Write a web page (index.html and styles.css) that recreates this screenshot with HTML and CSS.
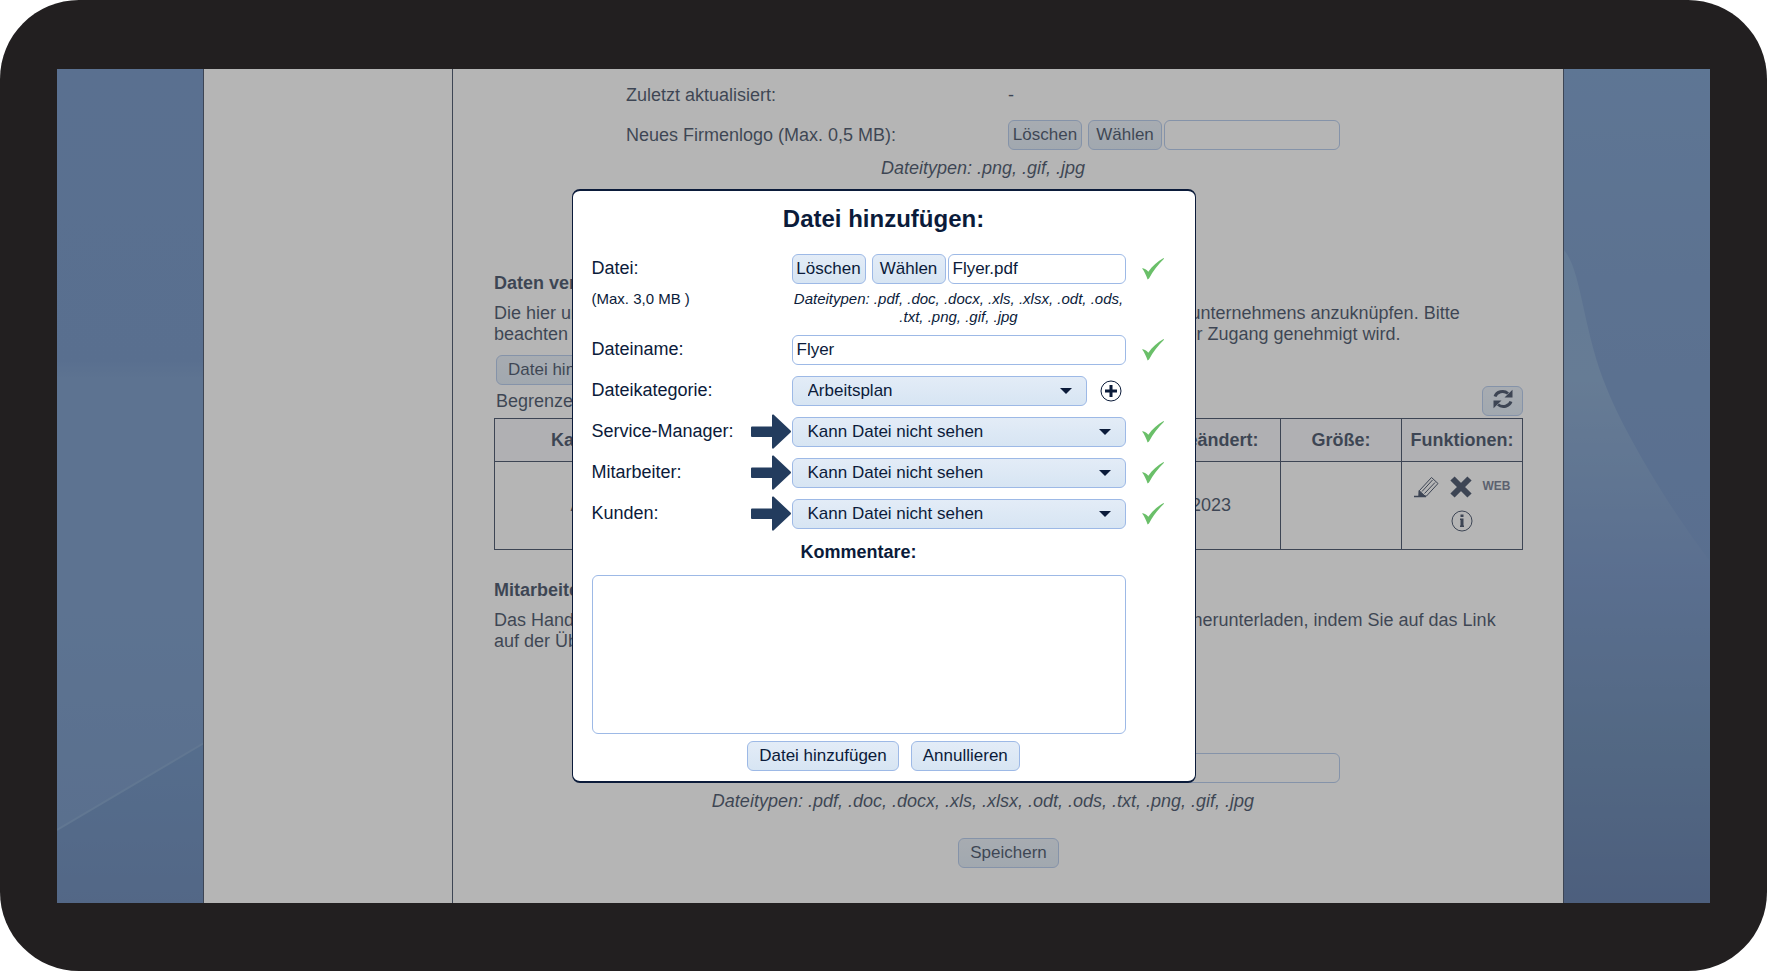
FILE: index.html
```html
<!DOCTYPE html>
<html lang="de">
<head>
    <meta charset="UTF-8">
    <meta name="viewport" content="width=device-width, initial-scale=1.0">
    <title>Datei hinzufügen</title>
    <link rel="stylesheet" href="styles.css">
</head>
<body>
    <svg class="symbols" aria-hidden="true">
        <symbol id="check" viewBox="0 0 22 22">
            <path d="M0 10.3C2.5 10.5 4.600 11.600 6.300 13.700C10.500 8 15.500 3.300 21.600 0L22 .8C16 6.500 11 13 7 20.500L5.600 21.500C4.300 17.500 2.500 13.700 0 10.300Z" fill="#6abf69"/>
        </symbol>
        <symbol id="arrow" viewBox="0 0 40 35">
            <path d="M1 12.500H21V1.500Q21 0 22.500 .5L39.500 16.500Q40.500 17.500 39.500 18.500L22.500 34.500Q21 35 21 33.500V23H1Q0 23 0 22V13.500Q0 12.500 1 12.500Z" fill="#233c5e"/>
        </symbol>
    </svg>

    <div class="tablet">
        <div class="screen">
            <svg class="wallpaper" viewBox="0 0 1653 834" preserveAspectRatio="none" aria-hidden="true">
                <defs>
                    <linearGradient id="leftSky" x1="0" y1="0" x2="0" y2="1">
                        <stop offset="0" stop-color="#4673b4"/>
                        <stop offset=".35" stop-color="#4571b2"/>
                        <stop offset=".37" stop-color="#4c78b5"/>
                        <stop offset=".65" stop-color="#4c79b6"/>
                        <stop offset=".9" stop-color="#4772b0"/>
                    </linearGradient>
                    <linearGradient id="leftFloor" x1="0" y1="0" x2="0" y2="1">
                        <stop offset="0" stop-color="#3c6dad"/>
                        <stop offset="1" stop-color="#3761a0"/>
                    </linearGradient>
                    <linearGradient id="rightSky" x1="0" y1="0" x2="0" y2="1">
                        <stop offset="0" stop-color="#4f7ebc"/>
                        <stop offset=".25" stop-color="#4b77b5"/>
                        <stop offset=".6" stop-color="#4570b2"/>
                    </linearGradient>
                    <linearGradient id="rightWave" x1="0" y1="0" x2="0" y2="1">
                        <stop offset="0" stop-color="#5a89bf"/>
                        <stop offset=".2" stop-color="#5f8bbd"/>
                        <stop offset=".5" stop-color="#4770b2"/>
                        <stop offset=".75" stop-color="#37639b"/>
                        <stop offset="1" stop-color="#2b508e"/>
                    </linearGradient>
                </defs>
                <rect width="827" height="834" fill="url(#leftSky)"/>
                <path d="M0 761L147 674V834H0Z" fill="url(#leftFloor)"/>
                <path d="M0 761L147 674" stroke="#5580b7" stroke-width="2"/>
                <rect x="827" width="826" height="834" fill="url(#rightSky)"/>
                <path d="M1506 180C1525 200 1525 260 1550 320C1570 370 1620 450 1653 492V834H1506Z" fill="url(#rightWave)"/>
            </svg>

            <div class="page">
                <aside class="sidebar"></aside>
                <main class="content">
                    <div class="settings">
                        <div class="settings-row">
                            <span>Zuletzt aktualisiert:</span>
                            <span>-</span>
                        </div>
                        <div class="settings-row">
                            <label for="logoFile">Neues Firmenlogo (Max. 0,5 MB):</label>
                            <div class="file-picker">
                                <button type="button" class="btn btn-file">Löschen</button>
                                <button type="button" class="btn btn-file">Wählen</button>
                                <input type="text" id="logoFile" class="field">
                            </div>
                        </div>
                        <p class="types">Dateitypen: .png, .gif, .jpg</p>
                    </div>

                    <section class="files">
                        <h2>Daten verknüpfen:</h2>
                        <p>Die hier unten genannten Daten können verwendet werden, um an Daten Ihres Kundenunternehmens anzuknüpfen. Bitte beachten Sie, dass die Daten erst dann im Account verwendet werden können, wenn der Zugang genehmigt wird.</p>
                        <button type="button" class="btn btn-add">Datei hinzufügen</button>
                        <div class="toolbar">
                            <span>Begrenzen auf:</span>
                            <button type="button" class="btn btn-refresh" aria-label="Aktualisieren">
                                <svg width="20" height="20" viewBox="0 0 20 20">
                                    <path d="M2 7.500C3.500 3 10.500 .5 15 4.500" fill="none" stroke="#0b1b3a" stroke-width="3"/>
                                    <path d="M19.500 .8V8.500H11.500Z" fill="#0b1b3a"/>
                                    <path d="M18 12.500C16.500 17 9.500 19.500 5 15.500" fill="none" stroke="#0b1b3a" stroke-width="3"/>
                                    <path d="M.5 19.200V11.500H8.500Z" fill="#0b1b3a"/>
                                </svg>
                            </button>
                        </div>
                        <table>
                            <colgroup>
                                <col class="col-category">
                                <col>
                                <col class="col-changed">
                                <col class="col-size">
                                <col class="col-actions">
                            </colgroup>
                            <thead>
                                <tr>
                                    <th>Kategorie:</th>
                                    <th>Dateiname:</th>
                                    <th>Zuletzt geändert:</th>
                                    <th>Größe:</th>
                                    <th>Funktionen:</th>
                                </tr>
                            </thead>
                            <tbody>
                                <tr>
                                    <td>Archiv</td>
                                    <td>Handbuch</td>
                                    <td>07.03.2023</td>
                                    <td></td>
                                    <td>
                                        <div class="actions">
                                            <button type="button" class="icon-btn" aria-label="Bearbeiten">
                                                <svg width="25" height="22" viewBox="0 0 25 22" fill="none" stroke="#0b1b3a">
                                                    <path d="M5.500 14.500L17.500 1.500L24 7.500L12.500 20L5 20.500Z"/>
                                                    <path d="M8 15.500L18.500 4M10.500 17.500L21 6.500"/>
                                                    <path d="M5 14.500V20.500H11.500Z" fill="#0b1b3a"/>
                                                    <path d="M0 20.500H12" stroke-width="1.500"/>
                                                </svg>
                                            </button>
                                            <button type="button" class="icon-btn" aria-label="Löschen">
                                                <svg width="22" height="22" viewBox="0 0 22 22">
                                                    <path d="M2.500 2.500L19.500 19.500M19.500 2.500L2.500 19.500" stroke="#0b1b3a" stroke-width="6"/>
                                                </svg>
                                            </button>
                                            <a href="#" class="web-link">WEB</a>
                                            <button type="button" class="icon-btn" aria-label="Information">
                                                <svg width="22" height="22" viewBox="0 0 22 22">
                                                    <circle cx="11" cy="11" r="10" fill="none" stroke="#0b1b3a"/>
                                                    <path d="M9.500 4.500H12.500V7H9.500ZM9 8.500H12.500V15.500H13V17H9V15.500H9.500V10H9Z" fill="#0b1b3a"/>
                                                </svg>
                                            </button>
                                        </div>
                                    </td>
                                </tr>
                            </tbody>
                        </table>
                    </section>

                    <section class="handbook">
                        <h2>Mitarbeiterhandbuch:</h2>
                        <p>Das Handbuch wird hochgeladen. Die Mitarbeiter können das Handbuch danach selbst herunterladen, indem Sie auf das Link auf der Übersichtsseite klicken.</p>
                    </section>

                    <div class="settings">
                        <div class="settings-row">
                            <label for="handbookFile">Neues Handbuch:</label>
                            <div class="file-picker">
                                <button type="button" class="btn btn-file">Löschen</button>
                                <button type="button" class="btn btn-file">Wählen</button>
                                <input type="text" id="handbookFile" class="field">
                            </div>
                        </div>
                        <p class="types">Dateitypen: .pdf, .doc, .docx, .xls, .xlsx, .odt, .ods, .txt, .png, .gif, .jpg</p>
                    </div>
                    <button type="button" class="btn btn-save">Speichern</button>
                </main>
            </div>

            <div class="overlay">
                <form class="dialog" role="dialog" aria-labelledby="dialogTitle">
                    <h1 id="dialogTitle">Datei hinzufügen:</h1>

                    <div class="form-row">
                        <label for="file">Datei:</label>
                        <div class="file-picker">
                            <button type="button" class="btn btn-file">Löschen</button>
                            <button type="button" class="btn btn-file">Wählen</button>
                            <input type="text" id="file" class="field" value="Flyer.pdf">
                        </div>
                        <svg class="check"><use href="#check"/></svg>
                    </div>
                    <div class="form-row form-hint">
                        <span>(Max. 3,0 MB )</span>
                        <em>Dateitypen: .pdf, .doc, .docx, .xls, .xlsx, .odt, .ods, .txt, .png, .gif, .jpg</em>
                    </div>
                    <div class="form-row">
                        <label for="fileName">Dateiname:</label>
                        <input type="text" id="fileName" class="field" value="Flyer">
                        <svg class="check"><use href="#check"/></svg>
                    </div>
                    <div class="form-row">
                        <label for="category">Dateikategorie:</label>
                        <div class="category">
                            <div class="select">
                                <select id="category">
                                    <option>Arbeitsplan</option>
                                    <option>Archiv</option>
                                </select>
                            </div>
                            <button type="button" class="icon-btn" aria-label="Kategorie hinzufügen">
                                <svg width="22" height="22" viewBox="0 0 22 22">
                                    <circle cx="11" cy="11" r="10" fill="none" stroke="#0b1b3a"/>
                                    <path d="M11 5V17M5 11H17" stroke="#0b1b3a" stroke-width="3"/>
                                </svg>
                            </button>
                        </div>
                    </div>
                    <div class="form-row">
                        <div class="label-arrow">
                            <label for="manager">Service-Manager:</label>
                            <svg class="arrow"><use href="#arrow"/></svg>
                        </div>
                        <div class="select">
                            <select id="manager">
                                <option>Kann Datei nicht sehen</option>
                                <option>Kann Datei sehen</option>
                            </select>
                        </div>
                        <svg class="check"><use href="#check"/></svg>
                    </div>
                    <div class="form-row">
                        <div class="label-arrow">
                            <label for="employee">Mitarbeiter:</label>
                            <svg class="arrow"><use href="#arrow"/></svg>
                        </div>
                        <div class="select">
                            <select id="employee">
                                <option>Kann Datei nicht sehen</option>
                                <option>Kann Datei sehen</option>
                            </select>
                        </div>
                        <svg class="check"><use href="#check"/></svg>
                    </div>
                    <div class="form-row">
                        <div class="label-arrow">
                            <label for="customer">Kunden:</label>
                            <svg class="arrow"><use href="#arrow"/></svg>
                        </div>
                        <div class="select">
                            <select id="customer">
                                <option>Kann Datei nicht sehen</option>
                                <option>Kann Datei sehen</option>
                            </select>
                        </div>
                        <svg class="check"><use href="#check"/></svg>
                    </div>

                    <div class="comments">
                        <label for="comments">Kommentare:</label>
                        <textarea id="comments"></textarea>
                    </div>

                    <div class="dialog-buttons">
                        <button type="submit" class="btn">Datei hinzufügen</button>
                        <button type="button" class="btn">Annullieren</button>
                    </div>
                </form>
            </div>
        </div>
    </div>
</body>
</html>
```
FILE: styles.css
```css
* {
    box-sizing: border-box;
}
body {
    margin: 0;
    background-color: white;
    color: #0b1b3a;
    font-family: "Liberation Sans", Arial, sans-serif;
    font-size: 18px;
    line-height: 21px;
}
h1, h2, p {
    margin: 0;
}
h2 {
    font-size: 18px;
    line-height: 21px;
    margin-bottom: 9px;
}
.symbols {
    display: none;
}

/* tablet frame */
.tablet {
    display: flex;
    min-height: 100vh;
    padding: 69px 57px 68px;
    background-color: #221f20;
    border-radius: 79px;
}
.screen {
    position: relative;
    flex: 1;
    display: flex;
    justify-content: center;
    overflow: hidden;
}
.wallpaper {
    position: absolute;
    inset: 0;
    width: 100%;
    height: 100%;
}
.page {
    position: relative;
    display: flex;
    width: 100%;
    max-width: 1361px;
    background-color: white;
    border-left: 1px solid #0b1b3a;
    border-right: 1px solid #0b1b3a;
}
.sidebar {
    width: 249px;
    border-right: 1px solid #0b1b3a;
}
.content {
    flex: 1;
    display: flex;
    flex-direction: column;
    padding: 6px 40px 30px 41px;
}

/* controls */
button, input, select, textarea {
    font-family: inherit;
    font-size: 17px;
    color: inherit;
}
.btn {
    height: 30px;
    padding: 0 11px;
    background: linear-gradient(#e3ecf7, #d7e5f3);
    border: 1px solid #9db9e6;
    border-radius: 6px;
    cursor: pointer;
}
.btn-file {
    flex: none;
    width: 74px;
    padding: 0;
    margin-right: 6px;
}
.field {
    width: 100%;
    min-width: 0;
    height: 30px;
    padding: 0 4px;
    background-color: white;
    border: 1px solid #9db9e6;
    border-radius: 6px;
}
.file-picker {
    display: flex;
}
.btn-file + .btn-file {
    margin-right: 2px;
}
.icon-btn {
    display: block;
    flex: none;
    padding: 0;
    background: none;
    border: none;
    cursor: pointer;
}
.icon-btn svg {
    display: block;
}

/* page content */
.settings {
    width: 714px;
    margin-left: 132px;
}
.settings-row {
    display: grid;
    grid-template-columns: 382px 1fr;
    align-items: center;
    min-height: 40px;
}
.types {
    padding-top: 3px;
    text-align: center;
    font-style: italic;
}
.files {
    margin-top: 94px;
}
.btn-add {
    display: block;
    margin: 10px 0 0 2px;
}
.toolbar {
    display: flex;
    justify-content: space-between;
    align-items: center;
    padding: 1px 0 2px 2px;
}
.btn-refresh {
    width: 41px;
    padding: 0;
}
table {
    width: 100%;
    table-layout: fixed;
    border-collapse: collapse;
}
th, td {
    padding: 0;
    border: 1px solid #0b1b3a;
    text-align: center;
}
th {
    height: 43px;
    background-color: #f5f5fb;
}
td {
    height: 88px;
}
.col-category {
    width: 202px;
}
.col-changed {
    width: 189px;
}
.col-size, .col-actions {
    width: 121px;
}
.actions {
    display: flex;
    flex-wrap: wrap;
    justify-content: center;
    align-items: center;
    gap: 12px 11px;
    padding-bottom: 4px;
}
.web-link {
    color: #4a5570;
    font-size: 12px;
    font-weight: bold;
    text-decoration: none;
}
.handbook {
    margin-top: 30px;
    margin-bottom: 96px;
}
.btn-save {
    align-self: center;
    width: 101px;
    margin-top: 26px;
}

/* dialog */
.overlay {
    position: absolute;
    inset: 0;
    display: flex;
    justify-content: center;
    align-items: center;
    background-color: rgba(110, 110, 110, 0.51);
}
.dialog {
    width: 624px;
    padding: 14px 19px 10px;
    background-color: white;
    border: 1px solid #0b1b3a;
    border-top-width: 2px;
    border-bottom-width: 2px;
    border-radius: 8px;
}
.dialog h1 {
    margin-bottom: 15px;
    font-size: 24px;
    line-height: 28px;
    text-align: center;
}
.form-row {
    display: grid;
    grid-template-columns: 200px 334px 1fr;
    align-items: center;
    min-height: 41px;
}
.form-hint {
    align-items: start;
    min-height: 40px;
    padding-top: 1px;
    font-size: 15px;
    line-height: 18px;
}
.form-hint em {
    text-align: center;
}
.check {
    width: 22px;
    height: 22px;
    margin-left: 16px;
}
.label-arrow {
    display: flex;
    justify-content: space-between;
    align-items: center;
}
.arrow {
    width: 40px;
    height: 35px;
    margin-right: 1px;
}
.select {
    position: relative;
    flex: 1;
}
.select::after {
    content: "";
    position: absolute;
    top: 12px;
    right: 15px;
    border: 6px solid transparent;
    border-top-color: #0b1b3a;
    border-bottom: none;
    pointer-events: none;
}
.select select {
    display: block;
    width: 100%;
    height: 30px;
    padding: 0 32px 0 15px;
    background: linear-gradient(#e3ecf7, #d7e5f3);
    border: 1px solid #9db9e6;
    border-radius: 6px;
    appearance: none;
}
.category {
    display: flex;
    align-items: center;
    gap: 13px;
    padding-right: 4px;
}
.comments {
    width: 534px;
}
.comments label {
    display: block;
    margin-bottom: 5px;
    font-weight: bold;
    line-height: 36px;
    text-align: center;
}
.comments textarea {
    display: block;
    width: 100%;
    height: 159px;
    border: 1px solid #9db9e6;
    border-radius: 6px;
    resize: none;
}
.dialog-buttons {
    display: flex;
    justify-content: center;
    gap: 12px;
    margin-top: 7px;
}
```
